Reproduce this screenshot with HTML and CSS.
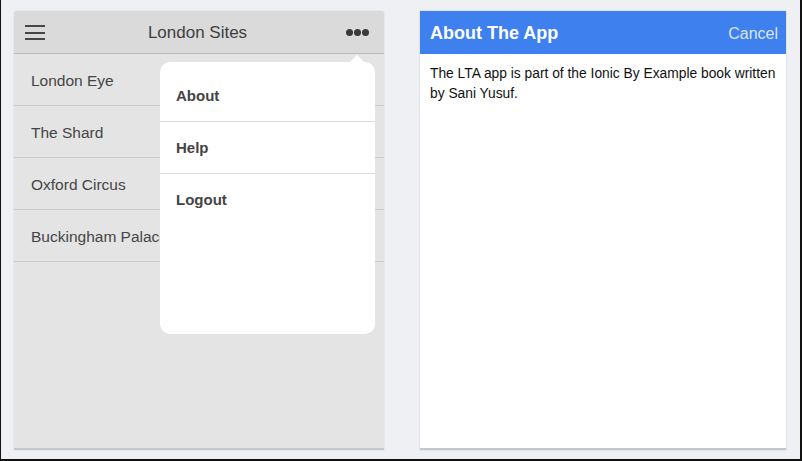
FILE: index.html
```html
<!DOCTYPE html>
<html>
<head>
<meta charset="utf-8">
<link rel="stylesheet" href="styles.css">
</head>
<body>
<div class="frame">
  <div class="phone phone-left">
    <header class="bar bar-gray">
      <span class="hamburger"><i></i><i></i><i></i></span>
      <span class="bar-title">London Sites</span>
      <span class="dots"><i></i><i></i><i></i></span>
    </header>
    <ul class="list">
      <li>London Eye</li>
      <li>The Shard</li>
      <li>Oxford Circus</li>
      <li>Buckingham Palace</li>
    </ul>
    <div class="popover">
      <span class="arrow"></span>
      <ul class="menu">
        <li>About</li>
        <li>Help</li>
        <li>Logout</li>
      </ul>
    </div>
  </div>
  <div class="phone phone-right">
    <header class="bar bar-blue">
      <span class="modal-title">About The App</span>
      <span class="cancel">Cancel</span>
    </header>
    <div class="content">The LTA app is part of the Ionic By Example book written by Sani Yusuf.</div>
  </div>
</div>
</body>
</html>
```
FILE: styles.css
```css
html, body {
  margin: 0;
  padding: 0;
}
body {
  font-family: "Liberation Sans", Arial, sans-serif;
  background: #eff0f4;
}
.frame {
  width: 802px;
  height: 461px;
  box-sizing: border-box;
  border-left: 1px solid #111;
  border-right: 2px solid #111;
  border-bottom: 2px solid #111;
  background: #eff0f4;
  display: flex;
  align-items: flex-start;
  padding: 11px 0 0 13px;
}
.phone {
  position: relative;
  box-sizing: border-box;
  overflow: hidden;
}
.phone-left {
  width: 370px;
  height: 439px;
  background: #e4e4e4;
  border-radius: 3px 3px 0 0;
  border-bottom: 2px solid #c3c6cc;
  box-shadow: 0 0 2px rgba(0,0,0,0.12);
}
.phone-right {
  width: 366px;
  height: 439px;
  margin-left: 36px;
  background: #fff;
  border-bottom: 2px solid #c3c6cc;
  box-shadow: 0 0 2px rgba(0,0,0,0.15);
}
.bar {
  height: 43px;
  display: flex;
  align-items: center;
  box-sizing: border-box;
  padding-top: 2px;
}
.bar-gray {
  background: #dadada;
  border-bottom: 1px solid #b8bbc1;
  padding-left: 11px;
  padding-right: 15px;
  justify-content: space-between;
}
.hamburger {
  display: flex;
  flex-direction: column;
  gap: 4.5px;
  width: 20px;
  margin-top: -1px;
}
.hamburger i {
  display: block;
  height: 2px;
  background: #454545;
}
.bar-title {
  font-size: 17px;
  color: #3f3f3f;
  margin-left: 4px;
}
.dots {
  display: flex;
  gap: 1px;
  margin-top: -1px;
}
.dots i {
  width: 7px;
  height: 7px;
  border-radius: 50%;
  background: #3a3a3a;
}
.list {
  list-style: none;
  margin: 0;
  padding: 0;
}
.list li {
  height: 51px;
  line-height: 53px;
  border-bottom: 1px solid #c9c9cf;
  padding-left: 17px;
  font-size: 15.5px;
  color: #454545;
  white-space: nowrap;
}
.popover {
  position: absolute;
  left: 146px;
  top: 51px;
  width: 215px;
  height: 272px;
  background: #fff;
  border-radius: 10px;
}
.arrow {
  position: absolute;
  right: 10px;
  top: -7px;
  width: 0;
  height: 0;
  border-left: 8px solid transparent;
  border-right: 8px solid transparent;
  border-bottom: 8px solid #fff;
}
.menu {
  list-style: none;
  margin: 0;
  padding: 8px 0 0;
}
.menu li {
  height: 51px;
  line-height: 51px;
  padding-left: 16px;
  font-size: 15px;
  font-weight: bold;
  color: #444;
  border-bottom: 1px solid #dadadd;
}
.menu li:last-child {
  border-bottom: none;
}
.bar-blue {
  background: #3e80ed;
  color: #fff;
  padding-left: 10px;
  padding-right: 8px;
  justify-content: space-between;
}
.modal-title {
  font-size: 18px;
  font-weight: bold;
}
.cancel {
  font-size: 16px;
  color: rgba(255,255,255,0.82);
  font-weight: 300;
}
.content {
  padding: 10px 10px;
  font-size: 13.8px;
  line-height: 20px;
  color: #111;
}
```
